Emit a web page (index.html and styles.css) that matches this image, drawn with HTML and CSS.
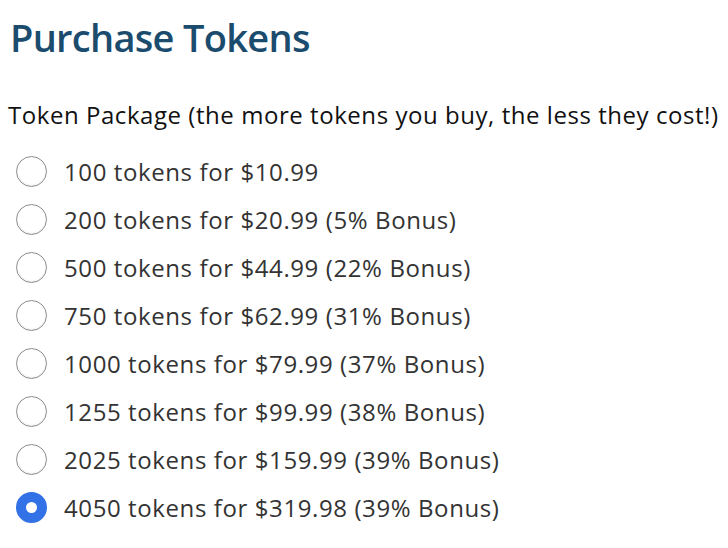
FILE: index.html
```html
<!DOCTYPE html>
<html lang="en">
<head>
    <meta charset="UTF-8">
    <meta name="viewport" content="width=device-width, initial-scale=1.0">
    <title>Purchase Tokens</title>
    <link rel="stylesheet" href="styles.css">
</head>
<body>
    <div class="purchase">
        <h1>Purchase Tokens</h1>

        <form id="tokenForm">
            <div class="form-group">
                <label class="group-label">Token Package (the more tokens you buy, the less they cost!)</label>
                <div class="options">
                    <label class="option-item"><input type="radio" name="package" value="100"> 100 tokens for $10.99</label>
                    <label class="option-item"><input type="radio" name="package" value="200"> 200 tokens for $20.99 (5% Bonus)</label>
                    <label class="option-item"><input type="radio" name="package" value="500"> 500 tokens for $44.99 (22% Bonus)</label>
                    <label class="option-item"><input type="radio" name="package" value="750"> 750 tokens for $62.99 (31% Bonus)</label>
                    <label class="option-item"><input type="radio" name="package" value="1000"> 1000 tokens for $79.99 (37% Bonus)</label>
                    <label class="option-item"><input type="radio" name="package" value="1255"> 1255 tokens for $99.99 (38% Bonus)</label>
                    <label class="option-item"><input type="radio" name="package" value="2025"> 2025 tokens for $159.99 (39% Bonus)</label>
                    <label class="option-item"><input type="radio" name="package" value="4050" checked> 4050 tokens for $319.98 (39% Bonus)</label>
                </div>
            </div>
        </form>
    </div>
</body>
</html>
```

FILE: styles.css
```css
body {
    margin: 0;
    padding: 0 8px;
    font-family: "Open Sans", Arial, sans-serif;
    background: white;
    color: #111;
}
h1 {
    margin: 13px 0 0 2px;
    font-size: 38px;
    font-weight: 600;
    letter-spacing: -0.7px;
    color: #1b4c6e;
    line-height: 48px;
}
.group-label {
    display: block;
    margin-top: 39px;
    font-size: 24px;
    letter-spacing: 0.55px;
    line-height: 30px;
    color: #111;
}
.options {
    margin-top: 17px;
}
.option-item {
    display: flex;
    align-items: center;
    gap: 17px;
    height: 48px;
    padding-left: 8px;
    font-size: 24px;
    letter-spacing: 0.6px;
    color: #333;
}
.option-item input {
    appearance: none;
    margin: 0;
    width: 31px;
    height: 31px;
    border: 1.5px solid #8c8c8c;
    border-radius: 50%;
    background: white;
    box-shadow: inset 0 -1px 2px rgba(0,0,0,0.08);
}
.option-item input:checked {
    border: 10px solid #3372e6;
    box-shadow: none;
}
```
